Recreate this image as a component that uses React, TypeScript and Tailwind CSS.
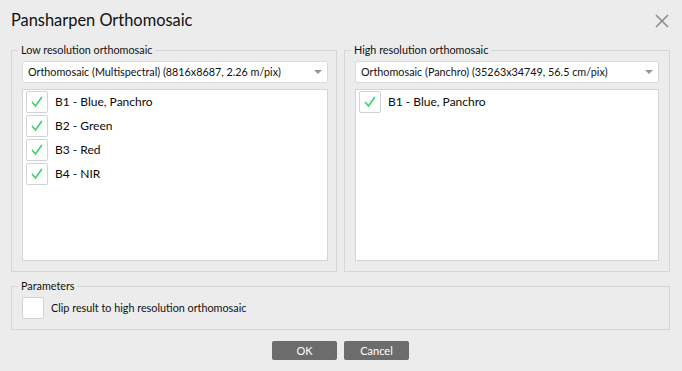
import { useState } from 'react';

type Band = { id: string; label: string; checked: boolean };

const lowBands: Band[] = [
  { id: 'b1', label: 'B1 - Blue, Panchro', checked: true },
  { id: 'b2', label: 'B2 - Green', checked: true },
  { id: 'b3', label: 'B3 - Red', checked: true },
  { id: 'b4', label: 'B4 - NIR', checked: true },
];

const highBands: Band[] = [{ id: 'p1', label: 'B1 - Blue, Panchro', checked: true }];

const CheckBox = ({ checked }: { checked: boolean }) => (
  <span className="w-[22px] h-[22px] shrink-0 flex items-center justify-center bg-white border border-[#d2d2d2] rounded-[2px]">
    {checked && (
      <svg width="14" height="14" viewBox="0 0 14 14" fill="none">
        <path
          d="M2.5 7.5 L5.5 11 L11.5 2.5"
          stroke="#3ed26e"
          strokeWidth="1.7"
          strokeLinecap="round"
          strokeLinejoin="round"
        />
      </svg>
    )}
  </span>
);

const ComboBox = ({ value }: { value: string }) => (
  <div className="h-[22px] flex items-center justify-between bg-white border border-[#dadada] rounded-[2px] pl-[5px] pr-[5px]">
    <span className="text-[10.8px] text-[#111] truncate">{value}</span>
    <svg width="8" height="4" viewBox="0 0 8 4" className="shrink-0">
      <path d="M0 0 H8 L4 4 Z" fill="#959595" />
    </svg>
  </div>
);

const GroupBox = ({
  title,
  className,
  children,
}: {
  title: string;
  className?: string;
  children: React.ReactNode;
}) => (
  <div className={`relative border border-[#d6d6d6] ${className ?? ''}`}>
    <span className="absolute -top-[9px] left-[6px] px-[3px] bg-[#ececec] text-[10.8px] leading-[16px] text-[#111]">
      {title}
    </span>
    {children}
  </div>
);

const OrthoPanel = ({
  title,
  source,
  bands,
  className,
}: {
  title: string;
  source: string;
  bands: Band[];
  className: string;
}) => (
  <GroupBox title={title} className={`min-w-0 flex flex-col pt-[10px] pb-[10px] pl-[10px] ${className}`}>
    <ComboBox value={source} />
    <div className="mt-[6px] flex-1 bg-white border border-[#d4d4d4] pl-[3px] pt-[1px] flex flex-col gap-[2px]">
      {bands.map((b) => (
        <div key={b.id} className="flex items-center gap-[7px] h-[22px]">
          <CheckBox checked={b.checked} />
          <span className="text-[12px] text-[#0a0a0a]">{b.label}</span>
        </div>
      ))}
    </div>
  </GroupBox>
);

export default function App() {
  const [clip] = useState(false);

  return (
    <div
      className="w-[682px] h-[371px] bg-[#ececec] flex flex-col pl-[11px] pr-[12px] overflow-hidden"
      style={{ fontFamily: 'Lato, "Noto Sans", sans-serif' }}
    >
      <div className="h-[42px] flex items-center justify-between pb-[1px]">
        <h1 className="text-[16.4px] text-[#111] font-normal">Pansharpen Orthomosaic</h1>
        <svg width="14" height="14" viewBox="0 0 14 14" className="mr-[1px]">
          <path d="M1 1 L13 13 M13 1 L1 13" stroke="#8c8c8c" strokeWidth="1.6" />
        </svg>
      </div>

      <div className="mt-[8px] h-[222px] flex gap-[7px]">
        <OrthoPanel
          title="Low resolution orthomosaic"
          source="Orthomosaic (Multispectral) (8816x8687, 2.26 m/pix)"
          bands={lowBands}
          className="w-[326px] pr-[8px]"
        />
        <OrthoPanel
          title="High resolution orthomosaic"
          source="Orthomosaic (Panchro) (35263x34749, 56.5 cm/pix)"
          bands={highBands}
          className="w-[326px] pr-[10px]"
        />
      </div>

      <GroupBox title="Parameters" className="mt-[14px] h-[44px] flex items-start pt-[10px] pl-[10px]">
        <div className="flex items-center gap-[7px]">
          <CheckBox checked={clip} />
          <span className="text-[10.8px] text-[#111]">Clip result to high resolution orthomosaic</span>
        </div>
      </GroupBox>

      <div className="mt-[11px] flex justify-center gap-[7px]">
        <button
          type="button"
          className="w-[65px] h-[19px] rounded-[2px] bg-[#6c6c6c] text-white text-[11px] leading-none"
        >
          OK
        </button>
        <button
          type="button"
          className="w-[65px] h-[19px] rounded-[2px] bg-[#6c6c6c] text-white text-[11px] leading-none"
        >
          Cancel
        </button>
      </div>
    </div>
  );
}
